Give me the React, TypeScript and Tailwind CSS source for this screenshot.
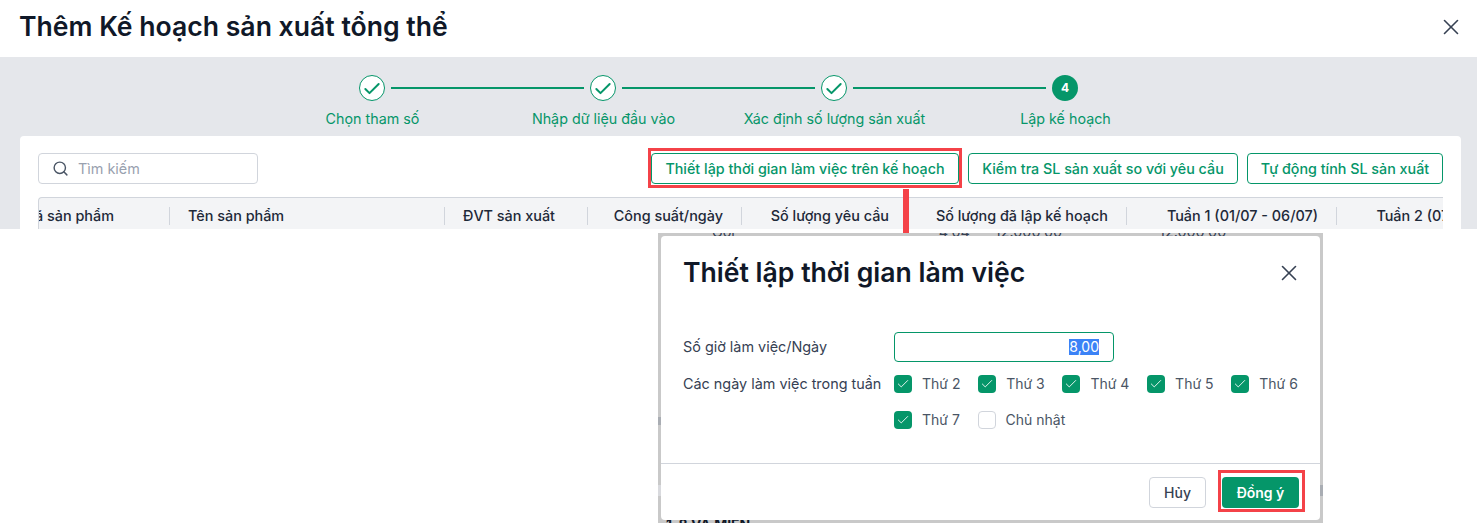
import React from "react";
import { Check, Search, X } from "lucide-react";

const steps = ["Chọn tham số", "Nhập dữ liệu đầu vào", "Xác định số lượng sản xuất", "Lập kế hoạch"];

const columns = [
  { label: "Mã sản phẩm", className: "w-[131px] justify-end", clip: true },
  { label: "Tên sản phẩm", className: "w-[275px] justify-start pl-[18px]" },
  { label: "ĐVT sản xuất", className: "w-[143px] justify-start pl-[18px]" },
  { label: "Công suất/ngày", className: "w-[154px] justify-end pr-[18px]" },
  { label: "Số lượng yêu cầu", className: "w-[165px] justify-end pr-[18px]" },
  { label: "Số lượng đã lập kế hoạch", className: "w-[220px] justify-end pr-[18px]" },
  { label: "Tuần 1 (01/07 - 06/07)", className: "w-[210px] justify-end pr-[18px]" },
  { label: "Tuần 2 (07/07 - 13/07)", className: "w-[210px] justify-end pr-[18px]" },
];

const days = [
  { label: "Thứ 2", checked: true },
  { label: "Thứ 3", checked: true },
  { label: "Thứ 4", checked: true },
  { label: "Thứ 5", checked: true },
  { label: "Thứ 6", checked: true },
  { label: "Thứ 7", checked: true },
  { label: "Chủ nhật", checked: false },
];

const StepIcon: React.FC<{ index: number }> = ({ index }) =>
  index < 3 ? (
    <div className="flex h-[26px] w-[26px] items-center justify-center rounded-full border border-[#059669] bg-white">
      <Check className="mt-[2px] h-5 w-5 text-[#059669]" strokeWidth={2.4} />
    </div>
  ) : (
    <div className="flex h-[26px] w-[26px] items-center justify-center rounded-full bg-[#059669] text-xs font-bold text-white">
      4
    </div>
  );

const OutlineButton: React.FC<{ children: React.ReactNode; className: string }> = ({ children, className }) => (
  <button className={`h-[31px] rounded border border-[#059669] bg-white text-[14.3px] font-medium text-[#059669] ${className}`}>
    {children}
  </button>
);

export default function App() {
  return (
    <div className="relative flex h-[523px] w-[1477px] flex-col overflow-hidden bg-white font-['Inter',sans-serif]">
      <header className="flex h-[57px] shrink-0 items-center justify-between pb-[3px] pl-[19px] pr-[13px]">
        <h1 className="text-[26.6px] font-semibold text-gray-900">Thêm Kế hoạch sản xuất tổng thể</h1>
        <X className="h-[26px] w-[26px] text-gray-700" strokeWidth={1.5} />
      </header>

      <section className="flex h-[172px] shrink-0 flex-col overflow-hidden bg-[#e5e7eb]">
        <div className="flex items-center pl-[359px] pt-[18px]">
          {steps.map((step, i) => (
            <React.Fragment key={step}>
              <StepIcon index={i} />
              {i < 3 && <div className="mx-[6px] h-[2px] w-[193px] bg-[#059669]" />}
            </React.Fragment>
          ))}
        </div>
        <div className="flex pl-[257px] pt-2">
          {steps.map((step) => (
            <div key={step} className="w-[231px] text-center text-[14.3px] leading-5 text-[#059669]">
              {step}
            </div>
          ))}
        </div>

        <div className="ml-5 mt-[7px] w-[1441px] flex-1 rounded-t bg-white pl-[18px] pr-[18px] pt-[17px]">
          <div className="flex items-center">
            <div className="flex h-[31px] w-[220px] items-center gap-[9px] rounded border border-gray-300 pl-[13px]">
              <Search className="h-[17px] w-[17px] text-gray-600" />
              <span className="text-[14.4px] text-gray-400">Tìm kiếm</span>
            </div>
            <div className="ml-auto flex gap-[9px]">
              <OutlineButton className="w-[308px]">Thiết lập thời gian làm việc trên kế hoạch</OutlineButton>
              <OutlineButton className="w-[270px]">Kiểm tra SL sản xuất so với yêu cầu</OutlineButton>
              <OutlineButton className="w-[196px]">Tự động tính SL sản xuất</OutlineButton>
            </div>
          </div>
          <div className="mt-[13px] flex h-[37px] items-center overflow-hidden rounded-tl border-l border-t border-gray-300 bg-[#f3f4f6]">
            {columns.map((col, i) => (
              <div
                key={col.label}
                className={`flex h-[18px] shrink-0 items-center whitespace-nowrap text-[14.4px] font-medium text-gray-800 ${col.className} ${
                  i < 7 && i !== 4 ? "border-r border-gray-300" : ""
                } ${col.clip ? "overflow-hidden" : ""}`}
              >
                {col.clip ? <span className="mr-[55px]">{col.label}</span> : col.label}
              </div>
            ))}
          </div>
        </div>
      </section>

      <div className="absolute left-[658px] top-[233px] h-[290px] w-[665px] bg-[#c9c9c9] p-[3px]">
        <div className="absolute left-0 top-0 flex h-[3px] w-full overflow-hidden text-[14.4px] leading-4 text-gray-700">
          <span className="ml-[54px] -mt-[9px]">Gói</span>
          <span className="ml-[204px] -mt-[9px]">4,04</span>
          <span className="ml-[25px] -mt-[9px]">12.000,00</span>
          <span className="ml-[97px] -mt-[9px]">12.000,00</span>
        </div>
        <div className="absolute bottom-0 left-0 h-[3px] w-full overflow-hidden pl-2 text-sm font-bold leading-4 text-gray-900">
          <div className="-mt-[3px]">1-8 VÀ MIỀN</div>
        </div>
        <div className="absolute left-0 top-[184px] h-2 w-[3px] bg-[#a9adb3]" />
        <div className="absolute left-0 top-[252px] h-[11px] w-[3px] bg-[#d9dade]" />
        <div className="absolute right-0 top-[252px] h-[11px] w-[3px] bg-[#a9adb3]" />

        <div className="relative flex h-full flex-col rounded bg-white">
          <div className="flex h-[74px] shrink-0 items-center justify-between pl-[22px] pr-[18px]">
            <h2 className="text-[26.6px] font-semibold text-gray-900">Thiết lập thời gian làm việc</h2>
            <X className="h-[26px] w-[26px] text-gray-700" strokeWidth={1.5} />
          </div>

          <div className="flex flex-1 flex-col pl-[22px] pt-[22px]">
            <div className="flex items-center">
              <span className="w-[211px] text-[14.4px] text-gray-700">Số giờ làm việc/Ngày</span>
              <div className="flex h-[30px] w-[220px] items-center justify-end rounded border border-[#059669] pr-[14px]">
                <span className="bg-[#3b82f6] text-sm leading-4 text-white">8,00</span>
              </div>
            </div>
            <div className="mt-[13px] flex">
              <span className="w-[211px] text-[14.4px] leading-[18px] text-gray-700">Các ngày làm việc trong tuần</span>
              <div className="flex w-[420px] flex-wrap gap-x-[17.7px] gap-y-[18px]">
                {days.map((day) => (
                  <label key={day.label} className="flex items-center gap-[10px] text-sm leading-[18px] text-gray-600">
                    {day.checked ? (
                      <span className="flex h-[18px] w-[18px] items-center justify-center rounded-sm bg-[#059669]">
                        <Check className="h-[14px] w-[14px] text-white" strokeWidth={1.5} />
                      </span>
                    ) : (
                      <span className="h-[18px] w-[18px] rounded-sm border border-gray-300 bg-white" />
                    )}
                    {day.label}
                  </label>
                ))}
              </div>
            </div>
          </div>

          <div className="flex h-[57px] shrink-0 items-start justify-end gap-4 border-t border-gray-300 pr-[21px] pt-[13px]">
            <button className="h-[31px] w-[57px] rounded border border-gray-300 bg-white text-sm font-medium text-gray-700">Hủy</button>
            <button className="h-[31px] w-[77px] rounded bg-[#059669] text-sm font-semibold text-white">Đồng ý</button>
          </div>
        </div>
      </div>

      {/* red callouts */}
      <div className="absolute left-[648px] top-[148px] h-[40px] w-[314px] border-[3px] border-[#f44248]" />
      <div className="absolute left-[903px] top-[189px] h-[44px] w-[6px] bg-[#f44248]" />
      <div className="absolute left-[1218px] top-[470px] h-[42px] w-[87px] border-[3px] border-[#f44248]" />
    </div>
  );
}
